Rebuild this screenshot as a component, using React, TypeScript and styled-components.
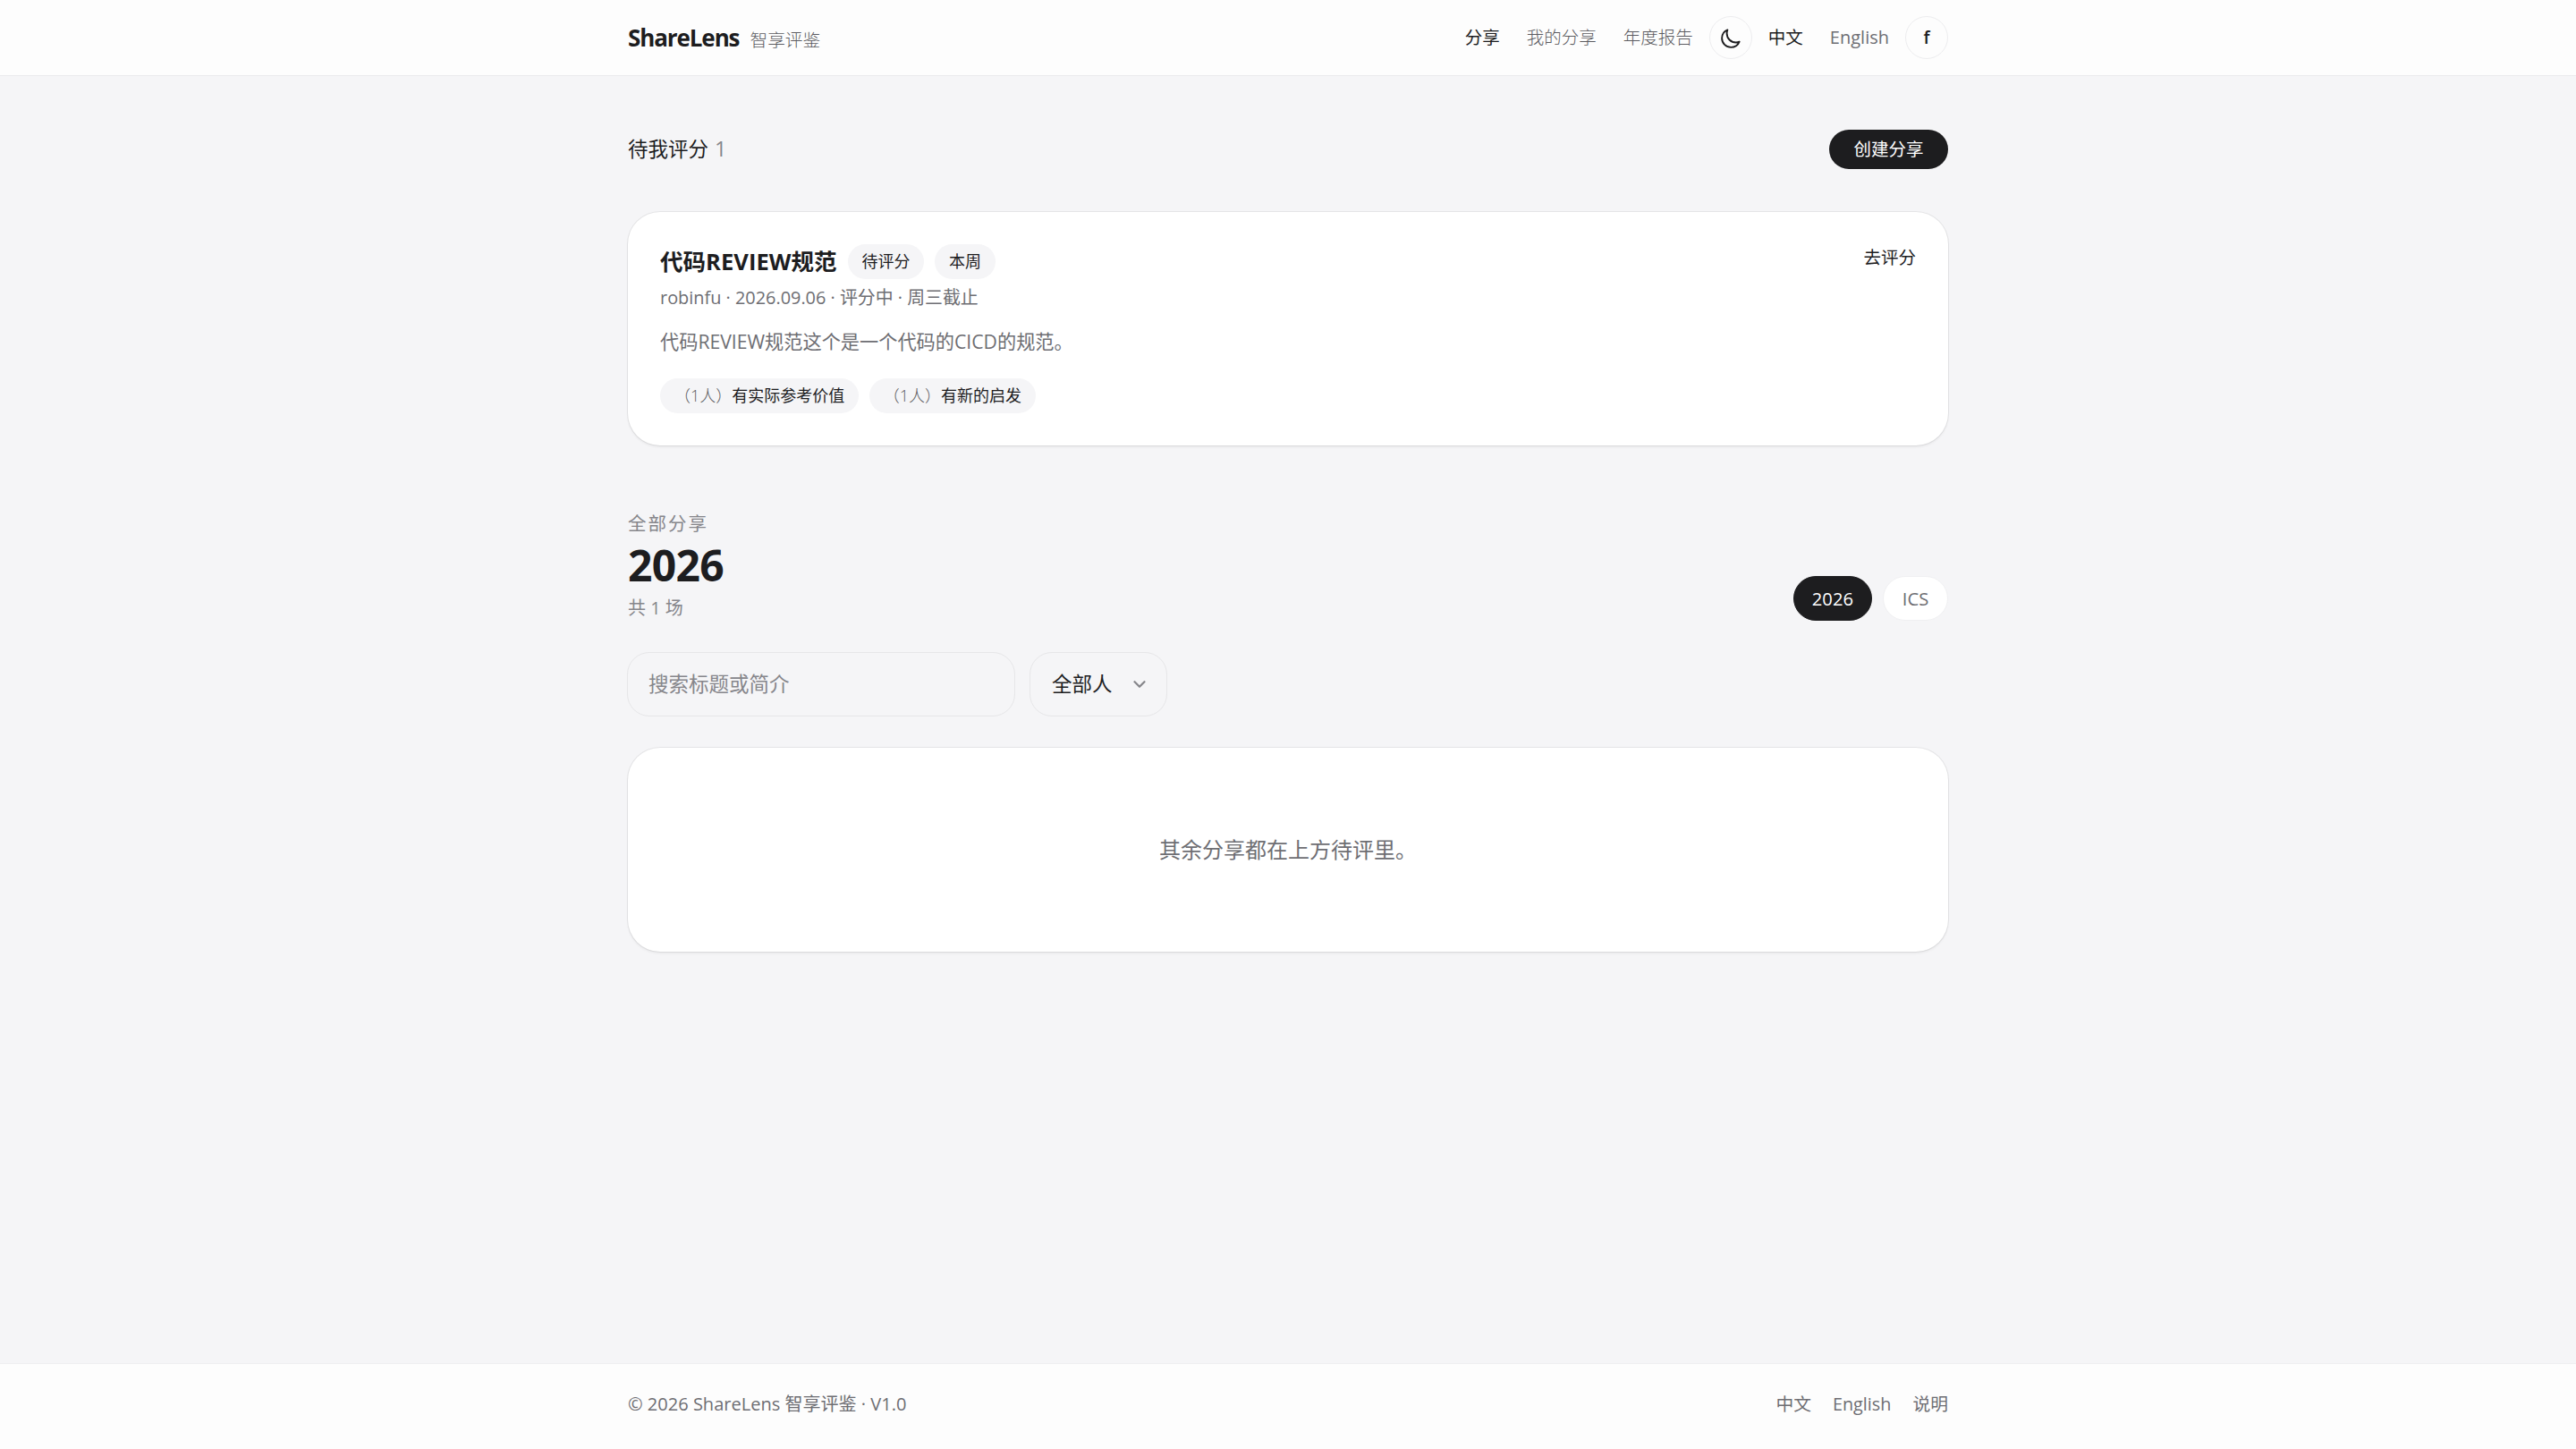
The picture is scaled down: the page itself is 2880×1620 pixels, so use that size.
import React from "react";
import styled, { createGlobalStyle } from "styled-components";

const ink = "#1d1d1f";
const muted = "#6e6e73";
const faint = "#86868b";

const GlobalStyle = createGlobalStyle`
  * { box-sizing: border-box; }
  body {
    margin: 0;
    background: #f5f5f7;
    color: ${ink};
    font-family: "Open Sans", "Noto Sans CJK SC", sans-serif;
    font-size: 19.5px;
    line-height: 30px;
  }
  h1, h2, h3, p { margin: 0; }
  a { color: inherit; text-decoration: none; }
  button, input { font: inherit; color: inherit; }
`;

const Page = styled.div`
  min-height: 1620px;
  display: flex;
  flex-direction: column;
`;

const Container = styled.div`
  width: 1476px;
  margin: 0 auto;
`;

const Header = styled.header`
  height: 85px;
  background: #fdfdfd;
  border-bottom: 1px solid #ebebed;
`;

const HeaderInner = styled(Container)`
  height: 84px;
  display: flex;
  align-items: center;
  justify-content: space-between;
`;

const Brand = styled.a`
  display: flex;
  align-items: baseline;
  gap: 12px;
  padding-top: 2px;
`;

const BrandName = styled.span`
  font-size: 26px;
  font-weight: 700;
  letter-spacing: -1.1px;
`;

const BrandSub = styled.span`
  color: #5c5c61;
  font-size: 19.7px;
  font-weight: 300;
`;

const Nav = styled.nav`
  display: flex;
  align-items: center;
  gap: 18px;
`;

const NavGroup = styled.div`
  display: flex;
  gap: 30px;
`;

const NavLink = styled.a<{ $active?: boolean; $latin?: boolean }>`
  color: ${(p) => (p.$active ? ink : p.$latin ? muted : "#5c5c61")};
  font-size: ${(p) => (p.$latin ? 20 : 19.5)}px;
  font-weight: ${(p) => (p.$latin || p.$active ? 400 : 300)};
`;

const RoundButton = styled.button`
  width: 48px;
  height: 48px;
  padding: 0;
  display: grid;
  place-items: center;
  border: 1px solid #ededef;
  border-radius: 50%;
  background: transparent;
  font-size: 19.5px;
  font-weight: 600;
`;

const Main = styled.main`
  flex: 1;
  padding-top: 60px;
`;

const TitleRow = styled.div`
  display: flex;
  align-items: center;
  justify-content: space-between;
  height: 44px;
`;

const PendingTitle = styled.h2`
  padding-bottom: 2px;
  font-size: 22.5px;
  font-weight: 400;
`;

const Count = styled.span`
  margin-left: 7px;
  color: ${faint};
  font-size: 23.5px;
`;

const CreateButton = styled.button`
  width: 133px;
  height: 44px;
  padding: 0;
  border: 0;
  border-radius: 22px;
  background: ${ink};
  color: #fff;
`;

const Card = styled.section`
  border-radius: 36px;
  background: #fff;
  box-shadow: 0 0 0 1px rgba(0, 0, 0, 0.06), 0 1.5px 3px rgba(0, 0, 0, 0.06);
`;

const ShareCard = styled(Card)`
  display: flex;
  justify-content: space-between;
  align-items: flex-start;
  height: 261px;
  margin-top: 48px;
  padding: 36px;
`;

const ShareTitleRow = styled.div`
  display: flex;
  align-items: center;
  gap: 12px;
`;

const ShareTitle = styled.h3`
  margin-top: -2px;
  font-size: 25.5px;
  font-weight: 700;
  letter-spacing: 0.05px;
`;

const Tag = styled.span`
  height: 39px;
  padding: 0 15.5px 0 16px;
  border-radius: 20px;
  background: #f5f5f7;
  font-size: 18px;
  line-height: 39px;
`;

const TagCount = styled.span`
  color: #5c5c61;
  font-weight: 300;
`;

const Meta = styled.p`
  margin-top: 6px;
  color: ${muted};
  font-size: 19.9px;
`;

const Description = styled.p`
  margin-top: 17px;
  color: ${muted};
  font-size: 21.2px;
  line-height: 34px;
`;

const TagRow = styled.div`
  display: flex;
  gap: 12px;
  margin-top: 24px;
`;

const RateLink = styled.a``;

const ListHeader = styled.div`
  display: flex;
  align-items: flex-end;
  justify-content: space-between;
  margin-top: 72px;
`;

const Eyebrow = styled.p`
  color: ${faint};
  font-size: 20.5px;
  letter-spacing: 2px;
`;

const Year = styled.h1`
  font-size: 48px;
  line-height: 64px;
  font-weight: 700;
  letter-spacing: -0.7px;
`;

const Total = styled.p`
  padding-top: 1px;
  color: ${faint};
  font-size: 20px;
  line-height: 29px;
`;

const Filters = styled.div`
  display: flex;
  gap: 12px;
`;

const FilterPill = styled.a<{ $active?: boolean }>`
  min-width: 73px;
  height: 50px;
  padding: 0 20px;
  border: 1px solid ${(p) => (p.$active ? ink : "#f0f0f2")};
  border-radius: 25px;
  background: ${(p) => (p.$active ? ink : "#fff")};
  color: ${(p) => (p.$active ? "#fff" : muted)};
  font-size: 20.2px;
  line-height: 48px;
  text-align: center;
`;

const Toolbar = styled.div`
  display: flex;
  gap: 16px;
  margin: 35px 0 35px -1px;
`;

const SearchInput = styled.input`
  width: 434px;
  height: 72px;
  padding: 0 23px 2px;
  border: 1.5px solid #e6e6e8;
  border-radius: 25px;
  background: transparent;
  font-size: 22.5px;
  outline: none;

  &::placeholder { color: ${faint}; opacity: 1; }
`;

const Select = styled.button`
  display: flex;
  align-items: center;
  justify-content: space-between;
  width: 154px;
  height: 72px;
  padding: 0 22px 0 24px;
  border: 1.5px solid #e6e6e8;
  border-radius: 25px;
  background: transparent;
  font-size: 22.5px;
`;

const EmptyCard = styled(Card)`
  display: grid;
  place-items: center;
  height: 228px;
  color: ${muted};
  font-size: 24px;
`;

const Footer = styled.footer`
  height: 96px;
  border-top: 1px solid #efeff1;
  background: #fdfdfd;
  color: ${muted};
`;

const FooterInner = styled(Container)`
  display: flex;
  align-items: center;
  justify-content: space-between;
  height: 90px;
`;

const Copyright = styled.span`
  font-size: 20.05px;
`;

const FooterLinks = styled.div`
  display: flex;
  gap: 24px;
  font-size: 19.8px;
`;

const MoonIcon = () => (
  <svg width="25" height="25" viewBox="0 -1 24 24" fill="none" stroke="currentColor" strokeWidth="1.8" strokeLinecap="round" strokeLinejoin="round">
    <path d="M21.75 15.002A9.72 9.72 0 0 1 18 15.75c-5.385 0-9.75-4.365-9.75-9.75 0-1.33.266-2.597.748-3.752A9.753 9.753 0 0 0 3 11.25C3 16.635 7.365 21 12.75 21a9.753 9.753 0 0 0 9.002-5.998Z" />
  </svg>
);

const ChevronIcon = () => (
  <svg width="16" height="16" viewBox="0 0 16 16" fill="none" stroke={faint} strokeWidth="2.2" strokeLinecap="round" strokeLinejoin="round">
    <path d="M2.5 5.2 8 10.8l5.500-5.600" />
  </svg>
);

const App: React.FC = () => (
  <Page>
    <GlobalStyle />
    <Header>
      <HeaderInner>
        <Brand>
          <BrandName>ShareLens</BrandName>
          <BrandSub>智享评鉴</BrandSub>
        </Brand>
        <Nav>
          <NavGroup>
            <NavLink $active>分享</NavLink>
            <NavLink>我的分享</NavLink>
            <NavLink>年度报告</NavLink>
          </NavGroup>
          <RoundButton><MoonIcon /></RoundButton>
          <NavGroup>
            <NavLink $active>中文</NavLink>
            <NavLink $latin>English</NavLink>
          </NavGroup>
          <RoundButton>f</RoundButton>
        </Nav>
      </HeaderInner>
    </Header>

    <Main>
      <Container>
        <TitleRow>
          <PendingTitle>待我评分<Count>1</Count></PendingTitle>
          <CreateButton>创建分享</CreateButton>
        </TitleRow>

        <ShareCard>
          <div>
            <ShareTitleRow>
              <ShareTitle>代码REVIEW规范</ShareTitle>
              <Tag>待评分</Tag>
              <Tag>本周</Tag>
            </ShareTitleRow>
            <Meta>robinfu · 2026.09.06 · 评分中 · 周三截止</Meta>
            <Description>代码REVIEW规范这个是一个代码的CICD的规范。</Description>
            <TagRow>
              <Tag><TagCount>（1人）</TagCount>有实际参考价值</Tag>
              <Tag><TagCount>（1人）</TagCount>有新的启发</Tag>
            </TagRow>
          </div>
          <RateLink>去评分</RateLink>
        </ShareCard>

        <ListHeader>
          <div>
            <Eyebrow>全部分享</Eyebrow>
            <Year>2026</Year>
            <Total>共 1 场</Total>
          </div>
          <Filters>
            <FilterPill $active>2026</FilterPill>
            <FilterPill>ICS</FilterPill>
          </Filters>
        </ListHeader>

        <Toolbar>
          <SearchInput placeholder="搜索标题或简介" />
          <Select>全部人<ChevronIcon /></Select>
        </Toolbar>

        <EmptyCard>其余分享都在上方待评里。</EmptyCard>
      </Container>
    </Main>

    <Footer>
      <FooterInner>
        <Copyright>© 2026 ShareLens 智享评鉴 · V1.0</Copyright>
        <FooterLinks>
          <a>中文</a>
          <a>English</a>
          <a>说明</a>
        </FooterLinks>
      </FooterInner>
    </Footer>
  </Page>
);

export default App;
